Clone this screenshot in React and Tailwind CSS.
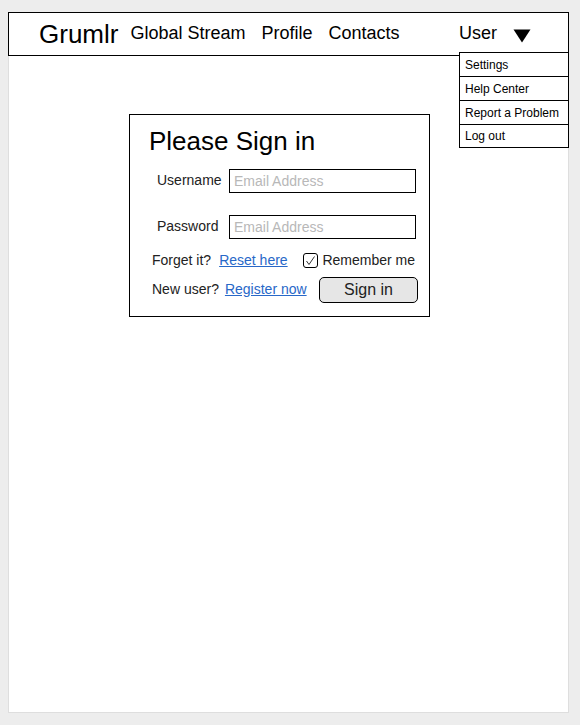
const navItems = ['Global Stream', 'Profile', 'Contacts'];
const menuItems = ['Settings', 'Help Center', 'Report a Problem', 'Log out'];

function Header() {
  return (
    <header className="relative -mx-px -mt-px flex h-11 items-start border border-black pr-[37px] pl-[30px]">
      <a href="#home" className="mt-1 mr-3 text-[26px] leading-[34px]">
        Grumlr
      </a>
      <nav className="mt-2 flex gap-4 text-lg leading-6">
        {navItems.map((item) => (
          <a key={item} href="#nav" className="whitespace-nowrap">
            {item}
          </a>
        ))}
      </nav>
      <button
        type="button"
        aria-haspopup="menu"
        aria-expanded="true"
        className="mt-2 ml-auto flex items-center gap-4 text-lg leading-6"
      >
        User
        <svg width="18" height="14" viewBox="0 0 18 14" className="mt-1.5" aria-hidden="true">
          <path d="M0.5 0.5H17.5L9 13.5Z" fill="#000" />
        </svg>
      </button>
      <ul className="absolute top-[39px] -right-px w-[110px] border border-black bg-white text-xs">
        {menuItems.map((item) => (
          <li
            key={item}
            className="h-6 border-b border-black pl-[5px] leading-[25px] last:h-[22px] last:border-b-0 last:leading-[22px]"
          >
            <a href="#menu" className="block whitespace-nowrap">
              {item}
            </a>
          </li>
        ))}
      </ul>
    </header>
  );
}

function Field({ id, label, type }) {
  return (
    <div className="flex items-start pl-[27px]">
      <label htmlFor={id} className="w-18 leading-[22px] text-[#222]">
        {label}
      </label>
      <input
        id={id}
        type={type}
        placeholder="Email Address"
        className="h-6 w-[187px] border border-black bg-white px-1 outline-none placeholder:text-[#b8b8b8]"
      />
    </div>
  );
}

function SignIn() {
  return (
    <form className="h-[203px] w-[301px] border border-black text-sm leading-5">
      <h1 className="mt-2.5 mb-3 pl-[19px] text-[26px] leading-8">Please Sign in</h1>
      <div className="flex flex-col gap-[22px]">
        <Field id="username" label="Username" type="text" />
        <Field id="password" label="Password" type="password" />
      </div>
      <div className="mt-[11px] flex items-center pr-3.5 pl-[22px] text-[#222]">
        <span>Forget it?</span>
        <a href="#reset" className="ml-2 text-[#2868c8] underline">
          Reset here
        </a>
        <label className="ml-auto flex items-center gap-1">
          <span className="relative flex">
            <input
              type="checkbox"
              defaultChecked
              className="peer size-[15px] appearance-none rounded-[3px] border border-black bg-white"
            />
            <svg
              viewBox="0 0 15 15"
              className="pointer-events-none absolute inset-0 hidden size-[15px] peer-checked:block"
              fill="none"
              stroke="#333"
              aria-hidden="true"
            >
              <path d="M3.5 8L6 11.5L11.5 3.5" />
            </svg>
          </span>
          Remember me
        </label>
      </div>
      <div className="mt-[7px] flex items-start pr-[11px] pl-[22px] leading-6 text-[#222]">
        <span>New user?</span>
        <a href="#register" className="ml-1.5 text-[#2868c8] underline">
          Register now
        </a>
        <button
          type="submit"
          className="ml-auto h-[26px] w-[99px] rounded-[5px] border border-black bg-[#e6e6e6] text-base leading-6"
        >
          Sign in
        </button>
      </div>
    </form>
  );
}

export default function App() {
  return (
    <div className="flex min-h-screen flex-col bg-[#ededed] pt-3 pr-[11px] pb-3 pl-2 font-['Liberation_Sans',Arial,sans-serif] text-black">
      <div className="flex grow flex-col border border-[#dedede] bg-white">
        <Header />
        <main className="flex justify-center pt-[58px] pr-[18px]">
          <SignIn />
        </main>
      </div>
    </div>
  );
}
